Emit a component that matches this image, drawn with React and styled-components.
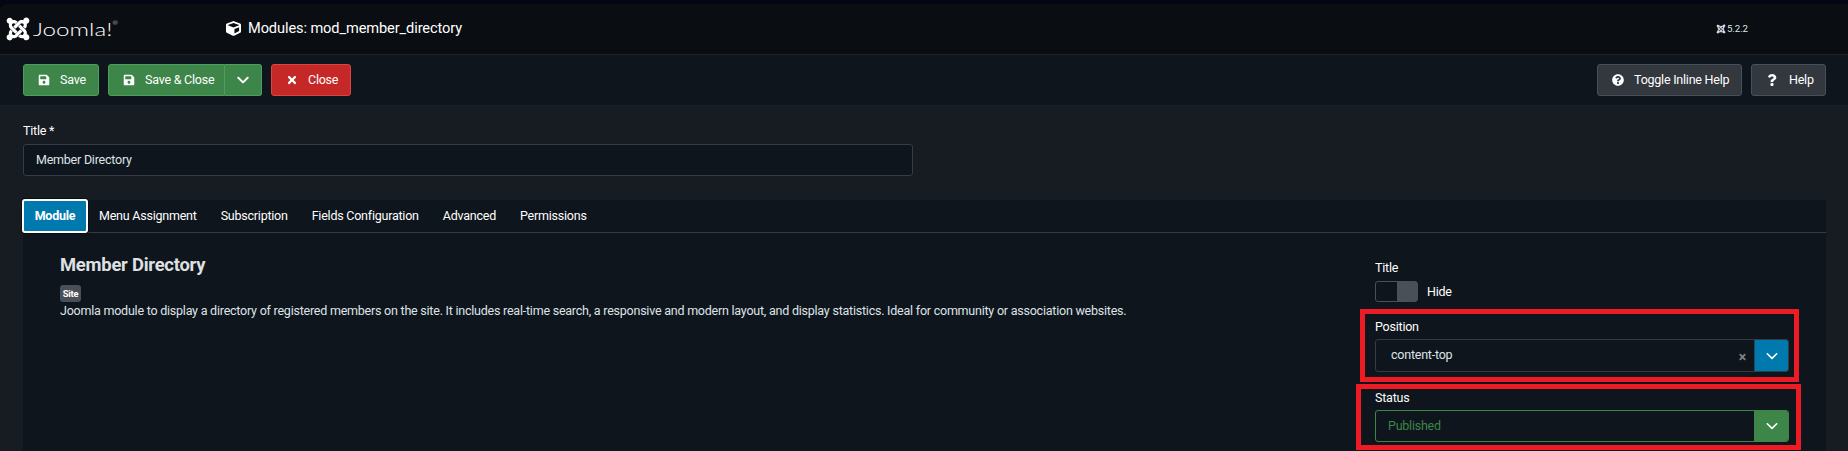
import React from "react";
import styled, { createGlobalStyle } from "styled-components";
import { FaCube, FaSave, FaTimes, FaQuestionCircle, FaQuestion, FaJoomla } from "react-icons/fa";

const Global = createGlobalStyle`
  * { box-sizing: border-box; }
  body {
    margin: 0; background: #171b22; color: #fff; overflow: hidden;
    font: 12.5px/20px Roboto, "Liberation Sans", sans-serif;
    letter-spacing: -0.228px;
  }
  button, input { font: inherit; letter-spacing: inherit; color: inherit; margin: 0; }
`;

const Page = styled.div`
  position: relative;
  height: 451px;
  overflow: hidden;
  background: #171b22;
`;

const TopStrip = styled.div`
  background: #050513;
  padding-top: 4px;
`;

const Header = styled.header`
  display: flex;
  align-items: center;
  height: 50px;
  padding: 0 100px 2px 5px;
  background: #0a0d11;
  border-radius: 7px 0 0 0;
`;

const Logo = styled.div`
  display: flex;
  align-items: center;
  width: 221px;
  svg { flex: none; margin-top: 2px; }
`;

const Wordmark = styled.span`
  display: flex;
  margin: 1px 0 0 2px;
  font: 300 18.5px/20px Lato, sans-serif;
  letter-spacing: 0;
  transform: scaleX(1.31);
  transform-origin: 0 50%;
  sup { font-size: 5px; line-height: 9px; }
`;

const PageTitle = styled.h1`
  display: flex;
  align-items: center;
  gap: 7px;
  margin: 0;
  font-size: 14.6px;
  font-weight: 400;
  letter-spacing: -0.1px;
`;

const Version = styled.div`
  display: flex;
  align-items: center;
  gap: 1px;
  margin-left: auto;
  padding-top: 2px;
  font-size: 9.75px;
  letter-spacing: -0.1px;
  color: #dfe3e7;
`;

const Toolbar = styled.div`
  display: flex;
  gap: 9px;
  height: 52px;
  padding: 9px 22px 0 23px;
  background: #0e151c;
  border-top: 1px solid #1c222b;
  border-bottom: 1px solid #1a2029;
`;

const tones = {
  success: ["#3d8549", "#4aa05a"],
  danger: ["#c52827", "#d84543"],
  neutral: ["#33373e", "#494f57"],
};

const Button = styled.button`
  display: flex;
  align-items: center;
  width: ${(p) => p.$width}px;
  height: 32px;
  padding: 0 0 1px ${(p) => p.$pad ?? 14}px;
  background: ${(p) => tones[p.$tone][0]};
  border: 1px solid ${(p) => tones[p.$tone][1]};
  border-radius: 3px;
  white-space: nowrap;
  svg { flex: none; margin-right: ${(p) => p.$gap ?? 10}px; }
`;

const SplitButton = styled.div`
  display: flex;
  > :first-child { border-radius: 3px 0 0 3px; }
  > :last-child { border-radius: 0 3px 3px 0; border-left: 0; }
`;

const Spacer = styled.div`flex: 1;`;

const Main = styled.main`padding: 14px 22px 0 23px;`;

const Label = styled.label`
  display: block;
  height: 20px;
  padding-top: 1px;
  margin-bottom: ${(p) => p.$gap ?? 4}px;
`;

const TitleInput = styled.input`
  display: block;
  width: 890px;
  height: 32px;
  padding: 0 12px 1px;
  background: #0e151c;
  border: 1px solid #363c44;
  border-radius: 3px;
  outline: 0;
  color: #dfe3e7;
`;

const Panel = styled.section`
  margin-top: 24px;
  height: 260px;
  background: #0e151c;
`;

const Tabs = styled.nav`
  display: flex;
  height: 33px;
  border-bottom: 1px solid #343a41;
`;

const Tab = styled.button`
  height: 33px;
  padding: 0 12px 1px;
  border: 0;
  background: none;
  white-space: nowrap;
  ${(p) => p.$active && `
    width: 66px;
    height: 34px;
    margin: -1px -1px 0;
    padding: 0 0 1px;
    background: #0079ae;
    font-weight: 700;
    border: 2px solid #fff;
    border-radius: 3px;
    box-shadow: 0 0 0 1px #0a0d11;
  `}
`;

const PanelBody = styled.div`
  display: flex;
  justify-content: space-between;
  padding: 24px 37px 0;
`;

const Heading = styled.h2`
  margin: -4px 0 8px;
  font-size: 18.4px;
  line-height: 24px;
  color: #dfe0e2;
`;

const Badge = styled.span`
  display: block;
  width: 21px;
  height: 17px;
  background: #495057;
  border-radius: 3px;
  font-size: 9.4px;
  font-weight: 700;
  line-height: 17px;
  text-align: center;
`;

const Description = styled.p`
  margin: -1px 0 0;
  color: #dfe3e7;
  white-space: nowrap;
`;

const Sidebar = styled.aside`width: 414px;`;

const SwitchRow = styled.div`
  display: flex;
  align-items: center;
  gap: 9px;
  height: 21px;
  margin-bottom: 14px;
`;

const Switch = styled.span`
  width: 43px;
  height: 21px;
  border: 1px solid #495057;
  border-radius: 3px;
  background: linear-gradient(90deg, #0e151c 21px, #495057 21px);
`;

const Select = styled.div`
  display: flex;
  align-items: center;
  height: ${(p) => p.$height}px;
  border: 1px solid ${(p) => p.$line};
  border-radius: 3px;
  color: ${(p) => p.$color};
  padding-left: ${(p) => p.$pad}px;
  overflow: hidden;
  margin-bottom: 15px;
`;

const SelectValue = styled.span`
  flex: 1;
  padding-bottom: 1px;
`;

const Clear = styled.span`
  margin-right: 8px;
  padding-top: 3px;
  font-size: 14px;
  font-weight: 700;
  color: #7d8389;
`;

const Arrow = styled.span`
  display: flex;
  align-items: center;
  justify-content: center;
  width: 34px;
  height: 100%;
  background: ${(p) => p.$bg};
  border-left: 1px solid ${(p) => p.$line};
  color: #fff;
`;

const Highlight = styled.div`
  position: absolute;
  left: ${(p) => p.$x}px;
  top: ${(p) => p.$y}px;
  width: ${(p) => p.$w}px;
  height: ${(p) => p.$h}px;
  border: 5px solid #ed1c24;
  pointer-events: none;
`;

const Chevron = ({ size = 12, stroke = 1.6 }) => (
  <svg width={size} height={size} viewBox="0 0 12 12" fill="none" stroke="currentColor"
    strokeWidth={stroke} strokeLinecap="round" strokeLinejoin="round">
    <path d="M1.3 3.8 6 8.4l4.7-4.6" />
  </svg>
);

const tabs = ["Module", "Menu Assignment", "Subscription", "Fields Configuration", "Advanced", "Permissions"];

export default function App() {
  return (
    <Page>
      <Global />
      <TopStrip>
        <Header>
          <Logo>
            <FaJoomla size={26} />
            <Wordmark>Joomla!<sup>®</sup></Wordmark>
          </Logo>
          <PageTitle><FaCube size={15} />Modules: mod_member_directory</PageTitle>
          <Version><FaJoomla size={10} />5.2.2</Version>
        </Header>
      </TopStrip>
      <Toolbar>
        <Button $tone="success" $width={76}><FaSave size={12} />Save</Button>
        <SplitButton>
          <Button $tone="success" $width={117}><FaSave size={12} />Save &amp; Close</Button>
          <Button $tone="success" $width={37} $pad={12} $gap={0} aria-label="More save actions"><Chevron stroke={2} /></Button>
        </SplitButton>
        <Button $tone="danger" $width={80}><FaTimes size={12} />Close</Button>
        <Spacer />
        <Button $tone="neutral" $width={145}><FaQuestionCircle size={12} />Toggle Inline Help</Button>
        <Button $tone="neutral" $width={75} $gap={11}><FaQuestion size={12} />Help</Button>
      </Toolbar>
      <Main>
        <Label htmlFor="title">Title *</Label>
        <TitleInput id="title" defaultValue="Member Directory" />
        <Panel>
          <Tabs>
            {tabs.map((t, i) => <Tab key={t} $active={i === 0}>{t}</Tab>)}
          </Tabs>
          <PanelBody>
            <div>
              <Heading>Member Directory</Heading>
              <Badge>Site</Badge>
              <Description>
                Joomla module to display a directory of registered members on the site. It includes real-time search, a responsive and modern layout, and display statistics. Ideal for community or association websites.
              </Description>
            </div>
            <Sidebar>
              <Label>Title</Label>
              <SwitchRow><Switch />Hide</SwitchRow>
              <Label $gap={3}>Position</Label>
              <Select $height={33} $line="#363c44" $color="#dfe3e7" $pad={15}>
                <SelectValue>content-top</SelectValue>
                <Clear>×</Clear>
                <Arrow $bg="#0079ae" $line="#26455a"><Chevron /></Arrow>
              </Select>
              <Label $gap={3}>Status</Label>
              <Select $height={32} $line="#3d8549" $color="#3d8549" $pad={12}>
                <SelectValue>Published</SelectValue>
                <Arrow $bg="#3d8549" $line="#3d8549"><Chevron /></Arrow>
              </Select>
            </Sidebar>
          </PanelBody>
        </Panel>
      </Main>
      <Highlight $x={1360} $y={309} $w={439} $h={73} />
      <Highlight $x={1356} $y={384} $w={445} $h={66} />
    </Page>
  );
}
